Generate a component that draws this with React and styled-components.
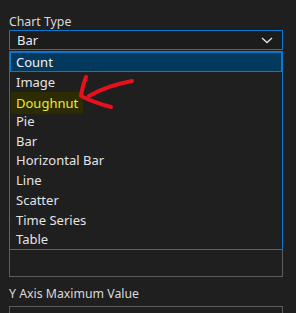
import React from "react";
import styled, { createGlobalStyle } from "styled-components";

const Global = createGlobalStyle`
  html, body { margin: 0; padding: 0; background: #1f1f1f; }
  body { font-family: "Noto Sans", "Open Sans", sans-serif; font-size: 13px; color: #cccccc; }
`;

const Page = styled.div`
  position: relative;
  width: 296px;
  height: 313px;
  overflow: hidden;
  box-sizing: border-box;
  padding: 13px 13px 0 9px;
`;

const Label = styled.div`
  height: 17px;
  line-height: 17px;
  font-size: 12.3px;
  color: #dadada;
  margin-top: ${(p) => p.$top || 0}px;
  margin-bottom: ${(p) => p.$gap || 0}px;
`;

const SelectWrap = styled.div`
  position: relative;
  z-index: 2;
`;

const Select = styled.div`
  display: flex;
  align-items: center;
  justify-content: space-between;
  height: 20px;
  box-sizing: border-box;
  border: 1px solid #0a78d0;
  background: #1c1c1c;
  padding: 0 9px 0 7px;
  color: #ececec;
`;

const Dropdown = styled.ul`
  position: absolute;
  left: 0;
  right: 0;
  top: 21px;
  height: 199px;
  margin: 0;
  padding: 0;
  list-style: none;
  box-sizing: border-box;
  border: 1px solid #0a78d0;
  background: #1f1f1f;
`;

const Item = styled.li`
  height: 19.7px;
  line-height: 19.7px;
  box-sizing: border-box;
  padding-left: 5px;
  color: ${(p) => (p.$selected ? "#f2f2f2" : "#e4e4e4")};
  background: ${(p) => (p.$selected ? "#04395e" : "transparent")};
  border: 1px solid ${(p) => (p.$selected ? "#0a78d0" : "transparent")};
`;

const Marked = styled.span`
  display: inline-block;
  margin-left: -5px;
  padding: 1px 5px 1px 5px;
  line-height: 20px;
  background: #2c2c00;
  color: #eaea3a;
`;

const Area = styled.div`
  height: 226px;
  margin-top: 1px;
  box-sizing: border-box;
  border: 1px solid #5c5c5c;
  background: #1f1f1f;
`;

const Input = styled.div`
  height: 22px;
  box-sizing: border-box;
  border: 1px solid #5c5c5c;
`;

const Annotation = styled.svg`
  position: absolute;
  left: 0;
  top: 0;
  z-index: 5;
  pointer-events: none;
`;

const items = [
  "Count",
  "Image",
  "Doughnut",
  "Pie",
  "Bar",
  "Horizontal Bar",
  "Line",
  "Scatter",
  "Time Series",
  "Table",
];

export default function App() {
  return (
    <Page>
      <Global />
      <Label>Chart Type</Label>
      <SelectWrap>
        <Select>
          <span>Bar</span>
          <svg width="12" height="7" viewBox="0 0 12 7">
            <path d="M1 1 L6 5.5 L11 1" fill="none" stroke="#e0e0e0" strokeWidth="1.4" />
          </svg>
        </Select>
        <Dropdown>
          {items.map((it, i) => (
            <Item key={it} $selected={i === 0}>
              {it === "Doughnut" ? <Marked>{it}</Marked> : it}
            </Item>
          ))}
        </Dropdown>
      </SelectWrap>
      <Area />
      <Label $top={8} $gap={4}>Y Axis Maximum Value</Label>
      <Input />
      <Annotation width="296" height="313" viewBox="0 0 296 313">
        <path d="M86 77 Q82 88 81 96 Q95 103 111 107" fill="none" stroke="#e8101c" strokeWidth="4" strokeLinecap="round" strokeLinejoin="round" />
        <path d="M89 96 Q106 86 132 81" fill="none" stroke="#e8101c" strokeWidth="4" strokeLinecap="round" />
      </Annotation>
    </Page>
  );
}
